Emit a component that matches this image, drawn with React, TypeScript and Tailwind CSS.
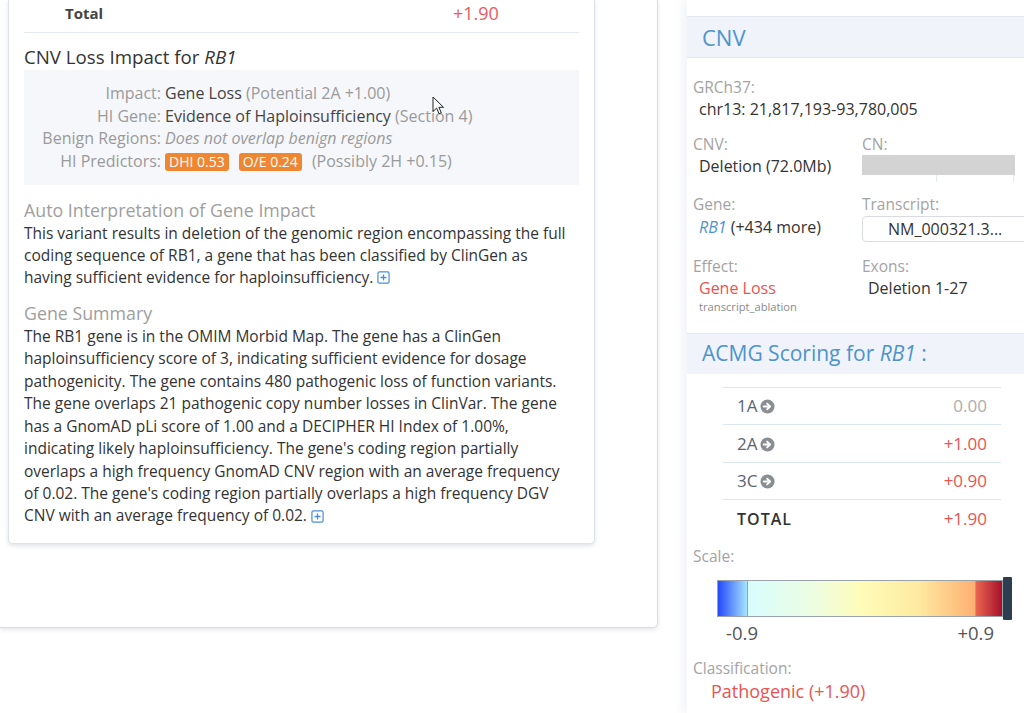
import type { ReactNode } from 'react';

const FONT = { fontFamily: '"Open Sans", "Noto Sans", sans-serif' };

function PlusSquare() {
  return (
    <svg viewBox="0 0 14 14" className="ml-1 inline-block h-[13px] w-[13px] -translate-y-[1px] align-middle">
      <rect x="1" y="1" width="12" height="12" rx="1.5" fill="none" stroke="#4a8fd6" strokeWidth="1.3" />
      <path d="M7 3.8v6.4M3.8 7h6.4" stroke="#4a8fd6" strokeWidth="1.4" />
    </svg>
  );
}

function ArrowCircle() {
  return (
    <svg viewBox="0 0 16 16" className="ml-[3px] inline-block h-[15px] w-[15px] align-middle -translate-y-[1px]">
      <circle cx="8" cy="8" r="7.5" fill="#8a8d91" />
      <path d="M4 8h6.2M7.6 4.9 10.8 8l-3.2 3.1" fill="none" stroke="#fff" strokeWidth="2" strokeLinecap="round" strokeLinejoin="round" />
    </svg>
  );
}

function Cursor() {
  return (
    <svg viewBox="0 0 12 19" className="pointer-events-none absolute left-[432px] top-[96px] h-[19px] w-[12px]">
      <path d="M1 1v14.5l3.6-3.4 2.5 5.6 2.2-1-2.4-5.4H11.5z" fill="#fff" stroke="#222" strokeWidth="1" strokeLinejoin="round" />
    </svg>
  );
}

function Badge({ children }: { children: ReactNode }) {
  return (
    <span className="inline-block rounded-[3px] bg-[#ef8632] px-[4px] text-[14px] leading-[18px] text-white">
      {children}
    </span>
  );
}

function Row({ label, children }: { label: string; children: ReactNode }) {
  return (
    <>
      <span className="text-right text-[#9a9a9a]">{label}:</span>
      <span className="text-[#444]">{children}</span>
    </>
  );
}

function Field({ label, children, className = '' }: { label: string; children: ReactNode; className?: string }) {
  return (
    <div className={className}>
      <div className="text-[15.5px] leading-[20px] text-[#a3a3a3]">{label}</div>
      {children}
    </div>
  );
}

function ScoreRow({ code, value, tone }: { code: string; value: string; tone: 'red' | 'gray' }) {
  return (
    <div className="flex h-[37.3px] items-center justify-between border-b border-[#dae6f1] px-[14px]">
      <span className="text-[17px] text-[#5b6472]">
        {code}
        <ArrowCircle />
      </span>
      <span className={`text-[17px] ${tone === 'red' ? 'text-[#ea5450]' : 'text-[#adadad]'}`}>{value}</span>
    </div>
  );
}

function LeftPanel() {
  return (
    <div className="relative w-[658px] shrink-0 self-start rounded-br-[5px] border-r border-b border-[#d3dbe5] bg-white pb-[83px] pl-2 pr-[62px] shadow-[0_2px_4px_rgba(40,60,90,0.12)]">
      <div className="rounded-b-[5px] border-x border-b border-[#dde3ea] bg-white px-[15px] pb-[16px] shadow-[0_2px_4px_rgba(40,60,90,0.14)]">
        <div className="grid h-[33px] grid-cols-[429px_1fr] items-center border-b border-[#e6ebf1] pb-[5px]">
          <span className="pl-[41px] text-[15px] font-bold text-[#444]">Total</span>
          <span className="text-[18px] text-[#ee5a5e]">+1.90</span>
        </div>

        <h3 className="mt-[12px] text-[18.7px] leading-[24px] text-[#333]">
          CNV Loss Impact for <i>RB1</i>
        </h3>
        <div className="mt-[1px] grid grid-cols-[137px_1fr] gap-x-[4px] bg-[#f5f7fa] py-[12px] text-[16px] leading-[22.6px]">
          <Row label="Impact">
            Gene Loss <span className="text-[#9a9a9a]">(Potential 2A +1.00)</span>
          </Row>
          <Row label="HI Gene">
            Evidence of Haploinsufficiency <span className="text-[#9a9a9a]">(Section 4)</span>
          </Row>
          <Row label="Benign Regions">
            <i className="text-[#9a9a9a]">Does not overlap benign regions</i>
          </Row>
          <Row label="HI Predictors">
            <span className="inline-flex items-center gap-[10px]">
              <Badge>DHI 0.53</Badge>
              <Badge>O/E 0.24</Badge>
              <span className="text-[#9a9a9a]">(Possibly 2H +0.15)</span>
            </span>
          </Row>
        </div>

        <h4 className="mt-[13px] text-[17.8px] leading-[24px] text-[#9e9e9e]">Auto Interpretation of Gene Impact</h4>
        <p className="pr-[8px] text-[15.5px] leading-[22px] text-[#333]">
          This variant results in deletion of the genomic region encompassing the full coding sequence of RB1, a gene
          that has been classified by ClinGen as having sufficient evidence for haploinsufficiency.
          <PlusSquare />
        </p>

        <h4 className="mt-[13px] text-[17.8px] leading-[24px] text-[#9e9e9e]">Gene Summary</h4>
        <p className="pr-[8px] text-[15.5px] leading-[22.4px] text-[#333]">
          The RB1 gene is in the OMIM Morbid Map. The gene has a ClinGen haploinsufficiency score of 3, indicating
          sufficient evidence for dosage pathogenicity. The gene contains 480 pathogenic loss of function variants. The
          gene overlaps 21 pathogenic copy number losses in ClinVar. The gene has a GnomAD pLi score of 1.00 and a
          DECIPHER HI Index of 1.00%, indicating likely haploinsufficiency. The gene's coding region partially overlaps
          a high frequency GnomAD CNV region with an average frequency of 0.02. The gene's coding region partially
          overlaps a high frequency DGV CNV with an average frequency of 0.02.
          <PlusSquare />
        </p>
      </div>
      <Cursor />
    </div>
  );
}

function ScaleBar() {
  return (
    <div className="ml-[30px] mt-[11px] flex h-[43px] items-center">
      <div className="flex h-[37px] w-[286px] border border-[#9aa3ab]">
        <div className="w-[29px] bg-[linear-gradient(to_right,#2449ff,#a6e4ff)]" />
        <div className="flex-1 border-x border-[#9aa3ab] bg-[linear-gradient(to_right,#d8fdff,#eefde0_30%,#fffcb8_50%,#feeaa0_75%,#fdb072)]" />
        <div className="w-[26px] bg-[linear-gradient(to_right,#ea6650,#a50f2a)]" />
      </div>
      <div className="h-[43px] w-[9px] rounded-[1px] bg-[#2c3e50]" />
    </div>
  );
}

function RightPanel() {
  return (
    <div className="min-h-[713px] min-w-0 flex-1 overflow-hidden bg-white shadow-[-6px_0_8px_rgba(40,60,90,0.05)]" style={FONT}>
      <div className="h-[16px]" />
      <div className="flex h-[42px] items-center border-y border-[#e4e9f0] bg-[#f0f3f9] pl-[15px] text-[22px] text-[#4d93cf]">
        CNV
      </div>

      <div className="px-[6px] pt-[19px]">
        <Field label="GRCh37:">
          <div className="pl-[6px] text-[16px] leading-[24px] text-[#333]">chr13: 21,817,193-93,780,005</div>
        </Field>

        <div className="mt-[13px] grid grid-cols-[169px_1fr]">
          <Field label="CNV:">
            <div className="pl-[6px] text-[16px] leading-[24px] text-[#333]">Deletion (72.0Mb)</div>
          </Field>
          <Field label="CN:">
            <div className="mt-[1px] h-[20px] w-[153px] bg-[#d3d3d3]" />
            <div className="flex h-[7px] w-[153px]">
              <div className="w-[75px] border-r border-[#e2e8f0]" />
              <div className="w-[77px] border-r border-[#e2e8f0]" />
            </div>
          </Field>
        </div>

        <div className="mt-[12px] grid grid-cols-[169px_1fr]">
          <Field label="Gene:">
            <div className="mt-[1px] pl-[6px] text-[16px] leading-[24px] text-[#333]">
              <i className="text-[#4d93cf]">RB1</i> (+434 more)
            </div>
          </Field>
          <Field label="Transcript:">
            <div className="mt-[2px] flex h-[26px] w-[170px] items-center rounded-[4px] border border-[#d9dde2] pl-[25px] text-[16px] text-[#333]">
              NM_000321.3...
            </div>
          </Field>
        </div>

        <div className="mt-[14px] grid grid-cols-[169px_1fr]">
          <Field label="Effect:">
            <div className="pl-[6px] text-[16px] leading-[24px] text-[#ea5450]">Gene Loss</div>
            <div className="pl-[6px] text-[11.2px] leading-[14px] text-[#8a8a8a]">transcript_ablation</div>
          </Field>
          <Field label="Exons:">
            <div className="pl-[6px] text-[16px] leading-[24px] text-[#333]">Deletion 1-27</div>
          </Field>
        </div>
      </div>

      <div className="mt-[19px] flex h-[41px] items-center border-t border-[#e4e9f0] bg-[#f0f3f9] pl-[15px] text-[21px] text-[#4d93cf]">
        ACMG Scoring for&nbsp;<i>RB1</i>&nbsp;:
      </div>

      <div className="ml-[36px] mr-[23px] mt-[13px] border-t border-[#dae6f1]">
        <ScoreRow code="1A" value="0.00" tone="gray" />
        <ScoreRow code="2A" value="+1.00" tone="red" />
        <ScoreRow code="3C" value="+0.90" tone="red" />
        <div className="flex h-[37.3px] items-center justify-between px-[14px]">
          <span className="text-[16px] font-semibold tracking-[1px] text-[#333]">TOTAL</span>
          <span className="text-[17px] text-[#ea5450]">+1.90</span>
        </div>
      </div>

      <div className="px-[6px]">
        <div className="mt-[9px] text-[15.5px] leading-[20px] text-[#a3a3a3]">Scale:</div>
      </div>
      <ScaleBar />
      <div className="ml-[39px] mt-[1px] flex w-[268px] justify-between text-[18.5px] leading-[24px] text-[#555]">
        <span>-0.9</span>
        <span>+0.9</span>
      </div>

      <div className="px-[6px]">
        <div className="mt-[13px] text-[15.5px] leading-[20px] text-[#a3a3a3]">Classification:</div>
        <div className="pl-[18px] pt-[1px] text-[18px] leading-[24px] text-[#ea5450]">Pathogenic (+1.90)</div>
      </div>
    </div>
  );
}

export default function App() {
  return (
    <div className="flex h-[713px] overflow-hidden bg-white" style={FONT}>
      <LeftPanel />
      <div className="w-[29px] shrink-0" />
      <RightPanel />
    </div>
  );
}
